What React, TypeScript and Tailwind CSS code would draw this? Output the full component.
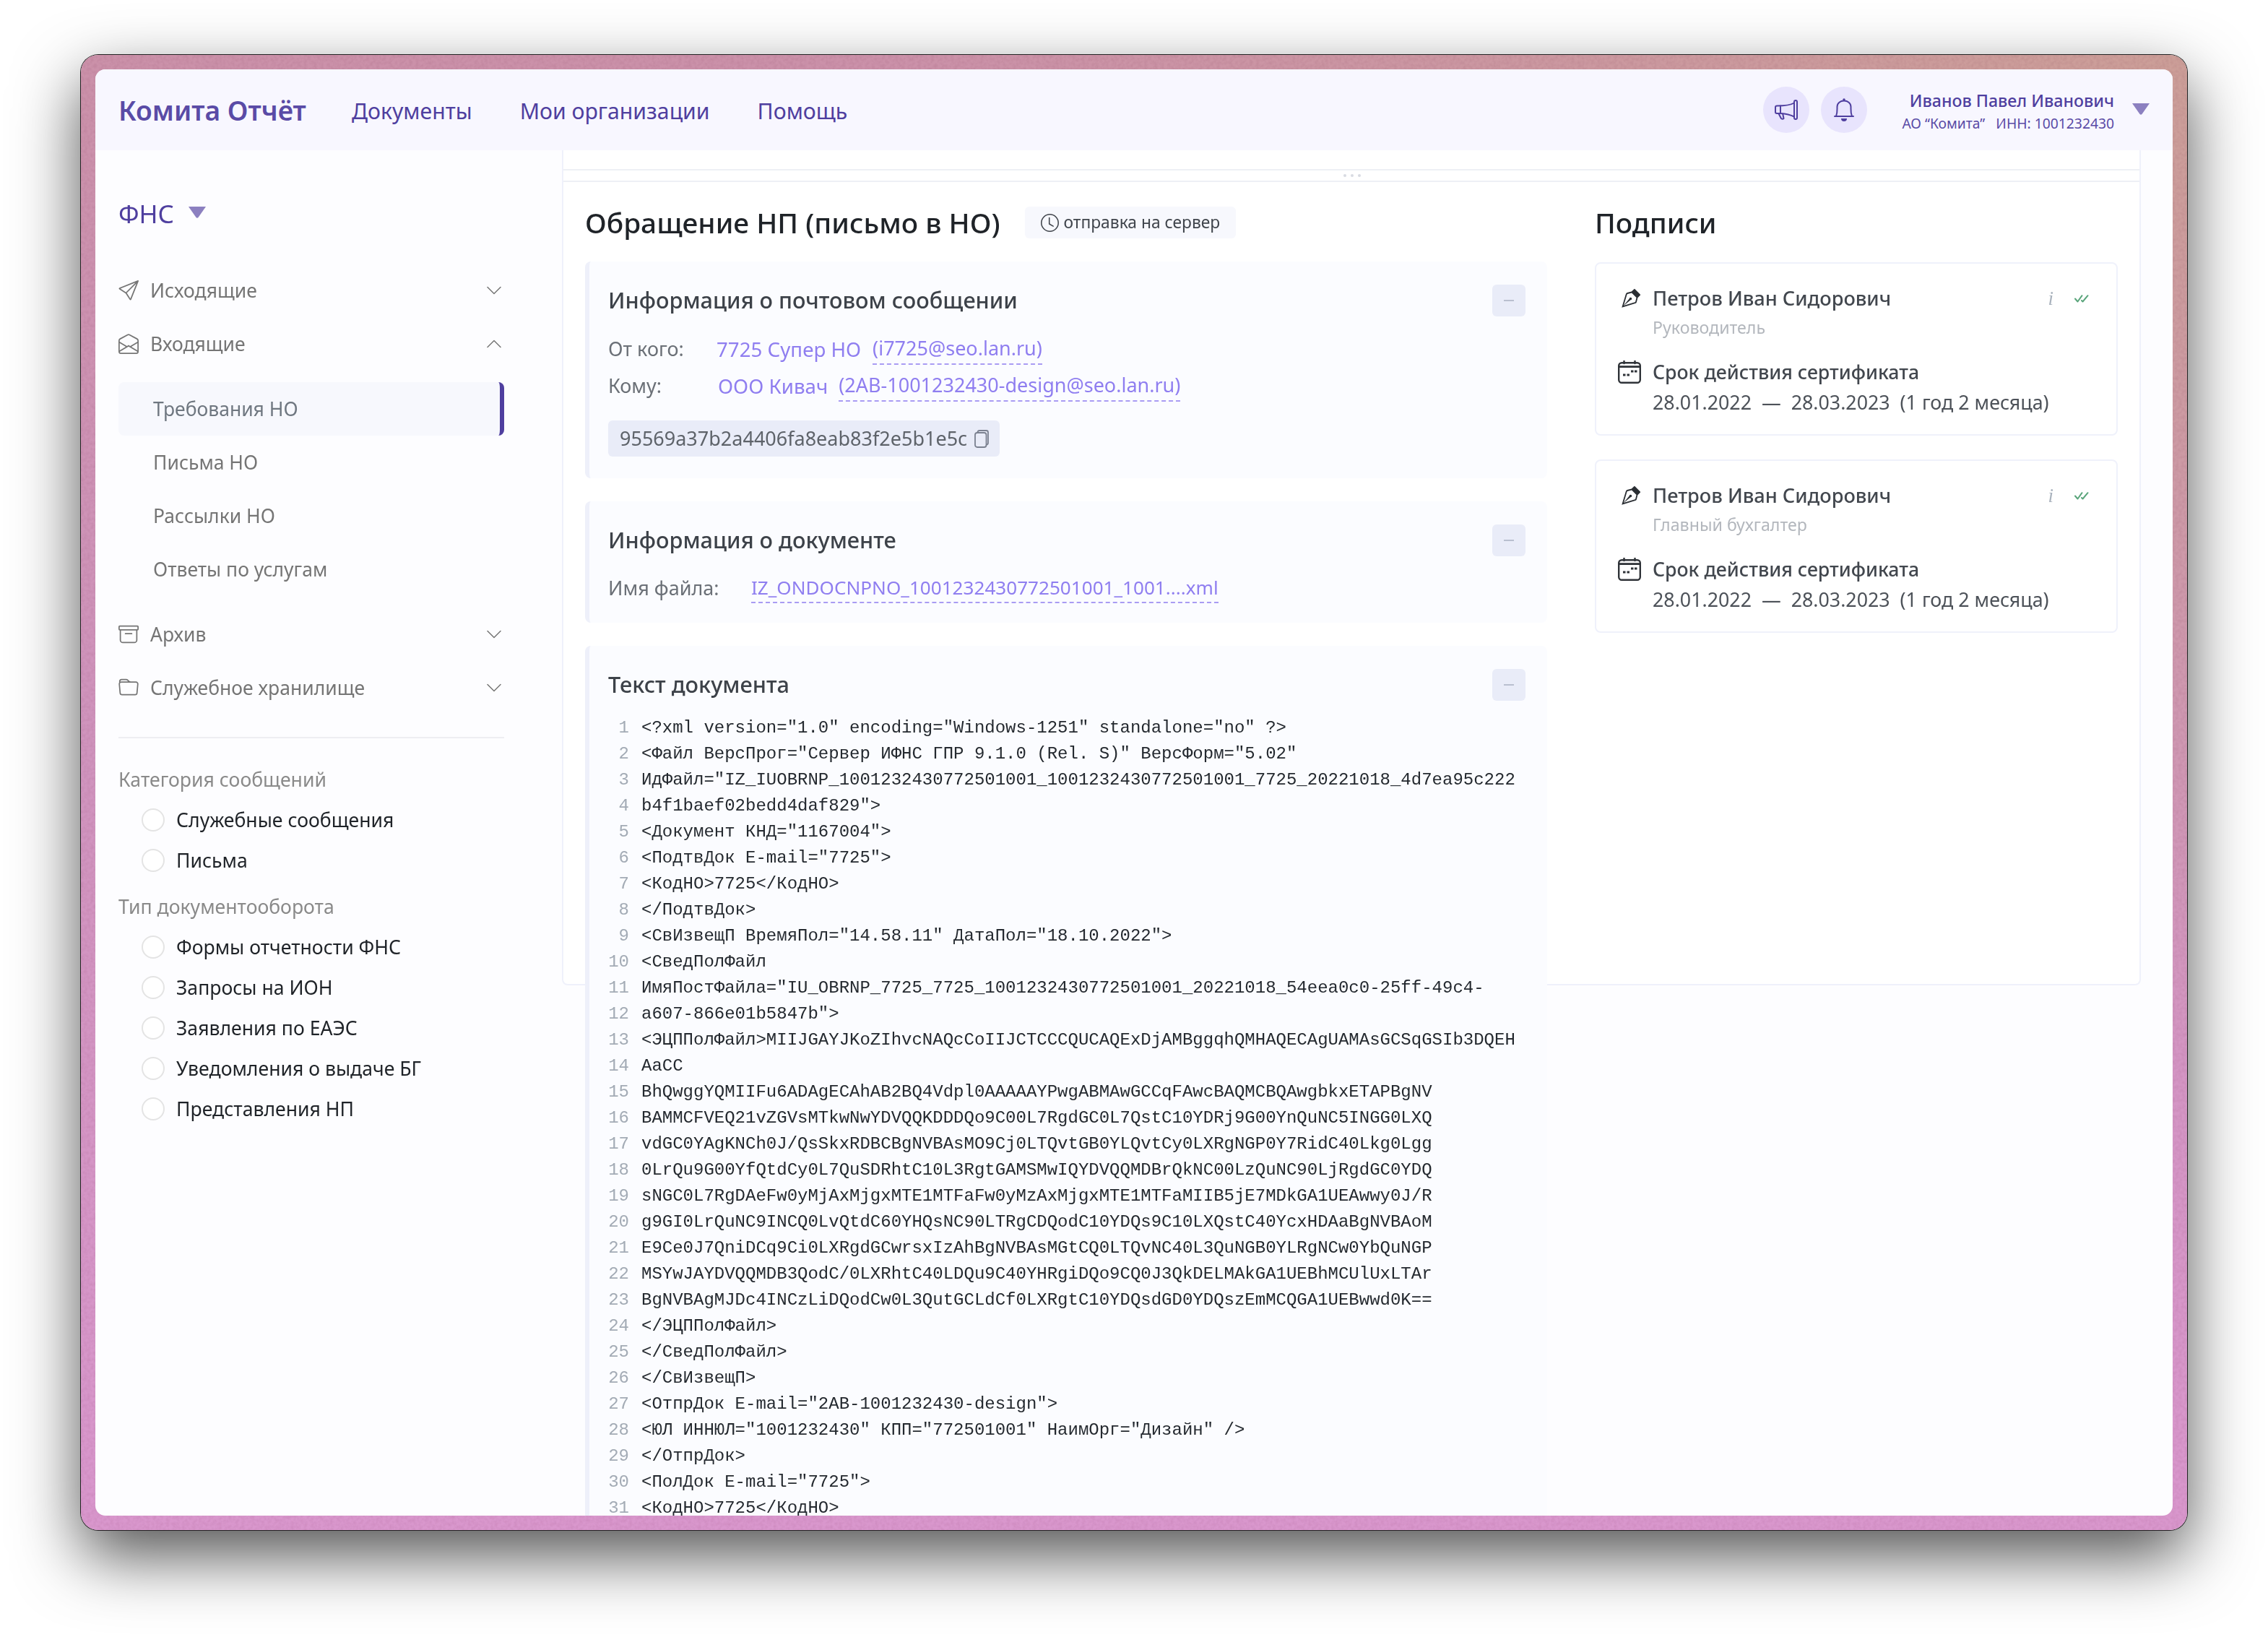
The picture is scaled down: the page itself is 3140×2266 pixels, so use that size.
import React from "react";
import { BsSend, BsEnvelopeOpen, BsArchive, BsFolder, BsChevronDown, BsChevronUp, BsClock, BsVectorPen } from "react-icons/bs";

const code = [
  '<?xml version="1.0" encoding="Windows-1251" standalone="no" ?>',
  '<Файл ВерсПрог="Сервер ИФНС ГПР 9.1.0 (Rel. S)" ВерсФорм="5.02"',
  'ИдФайл="IZ_IUOBRNP_1001232430772501001_1001232430772501001_7725_20221018_4d7ea95c222',
  'b4f1baef02bedd4daf829">',
  '<Документ КНД="1167004">',
  '<ПодтвДок E-mail="7725">',
  '<КодНО>7725</КодНО>',
  '</ПодтвДок>',
  '<СвИзвещП ВремяПол="14.58.11" ДатаПол="18.10.2022">',
  '<СведПолФайл',
  'ИмяПостФайла="IU_OBRNP_7725_7725_1001232430772501001_20221018_54eea0c0-25ff-49c4-',
  'a607-866e01b5847b">',
  '<ЭЦППолФайл>MIIJGAYJKoZIhvcNAQcCoIIJCTCCCQUCAQExDjAMBggqhQMHAQECAgUAMAsGCSqGSIb3DQEH',
  'AaCC',
  'BhQwggYQMIIFu6ADAgECAhAB2BQ4Vdpl0AAAAAYPwgABMAwGCCqFAwcBAQMCBQAwgbkxETAPBgNV',
  'BAMMCFVEQ21vZGVsMTkwNwYDVQQKDDDQo9C00L7RgdGC0L7QstC10YDRj9G00YnQuNC5INGG0LXQ',
  'vdGC0YAgKNCh0J/QsSkxRDBCBgNVBAsMO9Cj0LTQvtGB0YLQvtCy0LXRgNGP0Y7RidC40Lkg0Lgg',
  '0LrQu9G00YfQtdCy0L7QuSDRhtC10L3RgtGAMSMwIQYDVQQMDBrQkNC00LzQuNC90LjRgdGC0YDQ',
  'sNGC0L7RgDAeFw0yMjAxMjgxMTE1MTFaFw0yMzAxMjgxMTE1MTFaMIIB5jE7MDkGA1UEAwwy0J/R',
  'g9GI0LrQuNC9INCQ0LvQtdC60YHQsNC90LTRgCDQodC10YDQs9C10LXQstC40YcxHDAaBgNVBAoM',
  'E9Ce0J7QniDCq9Ci0LXRgdGCwrsxIzAhBgNVBAsMGtCQ0LTQvNC40L3QuNGB0YLRgNCw0YbQuNGP',
  'MSYwJAYDVQQMDB3QodC/0LXRhtC40LDQu9C40YHRgiDQo9CQ0J3QkDELMAkGA1UEBhMCUlUxLTAr',
  'BgNVBAgMJDc4INCzLiDQodCw0L3QutGCLdCf0LXRgtC10YDQsdGD0YDQszEmMCQGA1UEBwwd0K==',
  '</ЭЦППолФайл>',
  '</СведПолФайл>',
  '</СвИзвещП>',
  '<ОтпрДок E-mail="2AB-1001232430-design">',
  '<ЮЛ ИННЮЛ="1001232430" КПП="772501001" НаимОрг="Дизайн" />',
  '</ОтпрДок>',
  '<ПолДок E-mail="7725">',
  '<КодНО>7725</КодНО>',
];

function Tri({ className }: { className: string }) {
  return (
    <svg viewBox="0 0 24 16" className={className} fill="#8c80c0">
      <path d="M0 0 H24 L13.5 15 Q12 16.5 10.5 15 Z" />
    </svg>
  );
}

function Megaphone() {
  return (
    <svg viewBox="0 0 32 28" width={32} height={28} fill="none" stroke="#4f3f9f" strokeWidth={2} strokeLinejoin="round" strokeLinecap="round">
      <rect x="27" y="1" width="4" height="26" rx="2" />
      <path d="M27 4.5 C22 7.5 15 8.5 3 8.5 Q1 8.5 1 10.5 V17 Q1 19 3 19 H8 C15 19.5 22 21 27 23.5" />
      <path d="M8 8.5 V19" />
      <path d="M5.5 19.2 L9 26 Q11 27.5 12.5 26 L11.2 19.5" />
    </svg>
  );
}

function Bell() {
  return (
    <svg viewBox="0 0 28 32" width={28} height={32} fill="none" stroke="#4f3f9f" strokeWidth={2} strokeLinecap="round">
      <path d="M1 25 H27" />
      <path d="M3 25 C5 20 4.5 16 4.5 12 C4.5 6.5 9 3.5 14 3.5 C19 3.5 23.5 6.5 23.5 12 C23.5 16 23 20 25 25" />
      <circle cx="14" cy="2" r="1.8" fill="#4f3f9f" stroke="none" />
      <path d="M10 28 H18 A4 4 0 0 1 10 28 Z" fill="#4f3f9f" stroke="none" />
    </svg>
  );
}

function CalendarIcon() {
  return (
    <svg viewBox="0 0 32 32" width={32} height={32} fill="none" stroke="#2f3338" strokeWidth={2.4}>
      <rect x="1.2" y="3.2" width="29.6" height="27.6" rx="4" />
      <path d="M1.2 8.6 H30.8" strokeWidth={2.8} />
      <path d="M8.5 0.5 V4 M23.5 0.5 V4" strokeLinecap="round" />
      <path d="M7 20 H10.5 M12.5 20 H16 M18 15 H21.5 M23 15 H26.5" strokeWidth={2.8} />
    </svg>
  );
}

function CopyIcon() {
  return (
    <svg viewBox="0 0 20 25" width={20} height={25} fill="none" stroke="#7b8190" strokeWidth={1.8}>
      <rect x="1" y="4" width="15.5" height="20" rx="3" />
      <path d="M4.5 4 V3.5 Q4.5 1 7 1 H16.5 Q19 1 19 3.5 V18 Q19 20.5 16.5 20.5" />
    </svg>
  );
}

function DoubleCheck() {
  return (
    <svg viewBox="0 0 20 11" width={20} height={11} fill="none" stroke="#5aa57b" strokeWidth={2} strokeLinecap="round" strokeLinejoin="round">
      <path d="M1 5.5 L4.5 9.5 L10.5 1.2" />
      <path d="M10 8 L11.5 9.5 L18.5 1.2" />
    </svg>
  );
}

function MenuRow({ icon, label, up }: { icon: React.ReactNode; label: string; up?: boolean }) {
  return (
    <div className="flex h-[74px] items-center text-[#757575]">
      <span className="flex w-[44px] items-center">{icon}</span>
      <span className="flex-1 pt-[2px] text-[26.5px]">{label}</span>
      <span className="mr-[2px] flex w-[24px] justify-center">{up ? <BsChevronUp size={24} /> : <BsChevronDown size={24} />}</span>
    </div>
  );
}

function Radio({ label }: { label: string }) {
  return (
    <div className="flex h-[56px] items-center pl-[32px]">
      <span className="h-[32px] w-[32px] rounded-full border-2 border-[#e4e4e4] bg-white" />
      <span className="ml-[16px] pt-[2px] text-[26.6px] text-[#1f2328]">{label}</span>
    </div>
  );
}

function Minus() {
  return (
    <div className="flex h-[44px] w-[46px] items-center justify-center rounded-[6px] bg-[#e9ecf8]">
      <span className="h-[2px] w-[14px] bg-[#b9bfcf]" />
    </div>
  );
}

function CardHead({ title }: { title: string }) {
  return (
    <div className="flex h-[44px] items-center justify-between pr-[30px]">
      <span className="pb-[2px] text-[30.7px] font-medium text-[#3d4249]">{title}</span>
      <Minus />
    </div>
  );
}

function Link({ children }: { children: React.ReactNode }) {
  return <span className="text-[27.7px] text-[#8f7ef0]">{children}</span>;
}

function Dashed({ children, className }: { children: React.ReactNode; className: string }) {
  return <span className={`border-b-2 border-dashed border-[#a99cf3] text-[#8f7ef0] ${className}`}>{children}</span>;
}

function Sign({ role }: { role: string }) {
  return (
    <div className="flex h-[240px] flex-col rounded-[8px] border-2 border-[#eff1fb] pl-[28px] pr-[38px] pt-[30px]">
      <div className="flex h-[36px] items-center">
        <span className="flex w-[50px] items-center pl-[5px] text-[#2a2e33]"><BsVectorPen size={29} /></span>
        <span className="flex-1 text-[27.2px] font-medium text-[#42474e]">Петров Иван Сидорович</span>
        <span className="mr-[29px] font-['Liberation_Serif',serif] text-[27px] italic text-[#a9b2bd]">i</span>
        <DoubleCheck />
      </div>
      <div className="mt-[6px] flex h-[32px] items-center pl-[50px] text-[23.2px] text-[#b3b7bd]">{role}</div>
      <div className="mt-[28px] flex h-[36px] items-center">
        <span className="flex w-[50px] items-center pl-[2px]"><CalendarIcon /></span>
        <span className="text-[26.7px] font-medium text-[#42474e]">Срок действия сертификата</span>
      </div>
      <div className="mt-[6px] flex h-[36px] items-center whitespace-pre pl-[50px] text-[26.8px] text-[#4d5259]">28.01.2022  —  28.03.2023  (1 год 2 месяца)</div>
    </div>
  );
}

export default function App() {
  return (
    <div className="h-[2266px] w-[3140px] overflow-hidden bg-white pl-[112px] pt-[76px] font-['Noto_Sans',sans-serif]">
      <div className="relative h-[2042px] w-[2916px] rounded-[24px] bg-[radial-gradient(ellipse_1800px_1400px_at_100%_0%,rgba(204,160,150,0.9),transparent),linear-gradient(to_bottom,#cb91a9,#d094bd_45%,#d997cd)] p-[20px] shadow-[0_0_0_1px_#222,0_36px_90px_rgba(0,0,0,0.68)]">
        <svg className="absolute inset-0 h-full w-full rounded-[24px] opacity-25 mix-blend-multiply" aria-hidden="true">
          <filter id="leather">
            <feTurbulence type="fractalNoise" baseFrequency="0.22" numOctaves="2" seed="4" />
            <feColorMatrix values="0 0 0 0 0.6  0 0 0 0 0.4  0 0 0 0 0.5  1.6 0 0 0 -0.55" />
          </filter>
          <rect width="100%" height="100%" filter="url(#leather)" />
        </svg>
        <div className="relative flex h-full w-full flex-col overflow-hidden rounded-[14px] bg-[#fdfdff]">
          <header className="flex h-[112px] shrink-0 items-center bg-[#f8f7ff] pl-[32px] pr-[32px]">
            <span className="w-[323px] pt-[1px] text-[37.2px] font-semibold text-[#5a4ba6]">Комита Отчёт</span>
            <nav className="flex gap-[66px] pt-[3px] text-[30.2px] text-[#4f3f9f]">
              <span>Документы</span>
              <span>Мои организации</span>
              <span>Помощь</span>
            </nav>
            <div className="ml-auto flex items-center">
              <span className="flex h-[64px] w-[64px] items-center justify-center rounded-full bg-[#e8e4fd]"><Megaphone /></span>
              <span className="ml-[16px] flex h-[64px] w-[64px] items-center justify-center rounded-full bg-[#e8e4fd]"><Bell /></span>
              <div className="ml-[48px] flex flex-col items-end pt-[3px]">
                <span className="text-[23.2px] font-medium leading-[34px] text-[#4f3f9f]">Иванов Павел Иванович</span>
                <span className="whitespace-pre text-[19.3px] leading-[30px] text-[#5a4ba6]">АО “Комита”   ИНН: 1001232430</span>
              </div>
              <Tri className="mb-[2px] ml-[25px] h-[16px] w-[24px]" />
            </div>
          </header>
          <div className="flex min-h-0 flex-1">
            <aside className="w-[646px] shrink-0 pl-[32px] pr-[80px]">
              <div className="mb-[49px] mt-[68px] flex h-[40px] items-center">
                <span className="text-[35px] text-[#4f3f9f]">ФНС</span>
                <Tri className="mb-[4px] ml-[20px] h-[16px] w-[24px]" />
              </div>
              <MenuRow icon={<BsSend size={28} />} label="Исходящие" />
              <MenuRow icon={<BsEnvelopeOpen size={28} />} label="Входящие" up />
              <div className="mb-[16px] mt-[16px] text-[26.5px] text-[#757575]">
                <div className="flex h-[74px] items-center rounded-[8px] border-r-[6px] border-[#4f3f9f] bg-[#f7f8fd] pl-[48px] pt-[2px] text-[#6f7780]">Требования НО</div>
                <div className="flex h-[74px] items-center pl-[48px] pt-[2px]">Письма НО</div>
                <div className="flex h-[74px] items-center pl-[48px] pt-[2px]">Рассылки НО</div>
                <div className="flex h-[74px] items-center pl-[48px] pt-[2px]">Ответы по услугам</div>
              </div>
              <MenuRow icon={<BsArchive size={28} />} label="Архив" />
              <MenuRow icon={<BsFolder size={28} />} label="Служебное хранилище" />
              <div className="mt-[31px] h-[2px] bg-[#eeeef2]" />
              <div className="mt-[37px] flex h-[40px] items-center pt-[2px] text-[26.6px] text-[#8a8a8a]">Категория сообщений</div>
              <div className="mt-[8px]">
                <Radio label="Служебные сообщения" />
                <Radio label="Письма" />
              </div>
              <div className="mt-[16px] flex h-[40px] items-center pt-[2px] text-[26.6px] text-[#8a8a8a]">Тип документооборота</div>
              <div className="mt-[8px]">
                <Radio label="Формы отчетности ФНС" />
                <Radio label="Запросы на ИОН" />
                <Radio label="Заявления по ЕАЭС" />
                <Radio label="Уведомления о выдаче БГ" />
                <Radio label="Представления НП" />
              </div>
            </aside>
            <main className="flex h-[1156px] w-[2186px] shrink-0 flex-col rounded-b-[8px] border-x-2 border-b-2 border-[#eff1fb] bg-white">
              <div className="mt-[26px] flex h-[18px] shrink-0 items-center justify-center gap-[3px] border-y-2 border-[#eef0f5] pl-[2px]">
                <span className="h-[4px] w-[4px] rounded-full bg-[#d8dbe2]" />
                <span className="ml-[3px] h-[4px] w-[4px] rounded-full bg-[#d8dbe2]" />
                <span className="ml-[3px] h-[4px] w-[4px] rounded-full bg-[#d8dbe2]" />
              </div>
              <div className="flex gap-[66px] pl-[30px] pt-[34px]">
                <div className="w-[1332px] shrink-0">
                  <div className="flex h-[44px] items-center">
                    <h1 className="text-[38.8px] font-medium text-[#1f2328]">Обращение НП (письмо в НО)</h1>
                    <span className="ml-[34px] flex h-[44px] items-center gap-[7px] rounded-[6px] bg-[#f7f8fd] px-[22px] text-[22.8px] text-[#40454c]"><BsClock size={25} />отправка на сервер</span>
                  </div>
                  <section className="mt-[32px] h-[300px] rounded-[8px] border-l-[6px] border-[#eef0fa] bg-[#fbfcff] pl-[26px] pt-[32px]">
                    <CardHead title="Информация о почтовом сообщении" />
                    <div className="mt-[20px] flex h-[51px] items-center whitespace-pre text-[27px]">
                      <span className="w-[150px] text-[#6b7077]">От кого:</span>
                      <Link>7725 Супер НО</Link>
                      <Dashed className="ml-[16px]">(i7725@seo.lan.ru)</Dashed>
                    </div>
                    <div className="flex h-[51px] items-center whitespace-pre text-[27px]">
                      <span className="w-[152px] text-[#6b7077]">Кому:</span>
                      <Link>ООО Кивач</Link>
                      <Dashed className="ml-[15px]">(2AB-1001232430-design@seo.lan.ru)</Dashed>
                    </div>
                    <div className="mt-[22px] flex h-[50px] w-[542px] items-center justify-between rounded-[6px] bg-[#e9ecf8] pl-[16px] pr-[15px] text-[27px] text-[#5e636a]">
                      <span>95569a37b2a4406fa8eab83f2e5b1e5c</span>
                      <CopyIcon />
                    </div>
                  </section>
                  <section className="mt-[32px] h-[168px] rounded-[8px] border-l-[6px] border-[#eef0fa] bg-[#fbfcff] pl-[26px] pt-[32px]">
                    <CardHead title="Информация о документе" />
                    <div className="mt-[19px] flex h-[51px] items-center whitespace-pre text-[27px]">
                      <span className="w-[198px] text-[#6b7077]">Имя файла:</span>
                      <Dashed className="text-[26.1px]">IZ_ONDOCNPNO_1001232430772501001_1001....xml</Dashed>
                    </div>
                  </section>
                  <section className="mt-[32px] rounded-[8px] border-l-[6px] border-[#eef0fa] bg-[#fbfcff] pl-[26px] pt-[32px]">
                    <CardHead title="Текст документа" />
                    <div className="mt-[20px] font-['Liberation_Mono',monospace] text-[24px] leading-[36px]">
                      {code.map((line, i) => (
                        <div key={i} className="flex whitespace-pre">
                          <span className="w-[29px] shrink-0 text-right text-[#a3abb5]">{i + 1}</span>
                          <span className="ml-[17px] text-[#24292f]">{line}</span>
                        </div>
                      ))}
                    </div>
                  </section>
                </div>
                <div className="w-[724px] shrink-0">
                  <div className="flex h-[44px] items-center text-[38.8px] font-medium text-[#1f2328]">Подписи</div>
                  <div className="mt-[33px] flex flex-col gap-[33px]">
                    <Sign role="Руководитель" />
                    <Sign role="Главный бухгалтер" />
                  </div>
                </div>
              </div>
            </main>
          </div>
        </div>
      </div>
    </div>
  );
}
